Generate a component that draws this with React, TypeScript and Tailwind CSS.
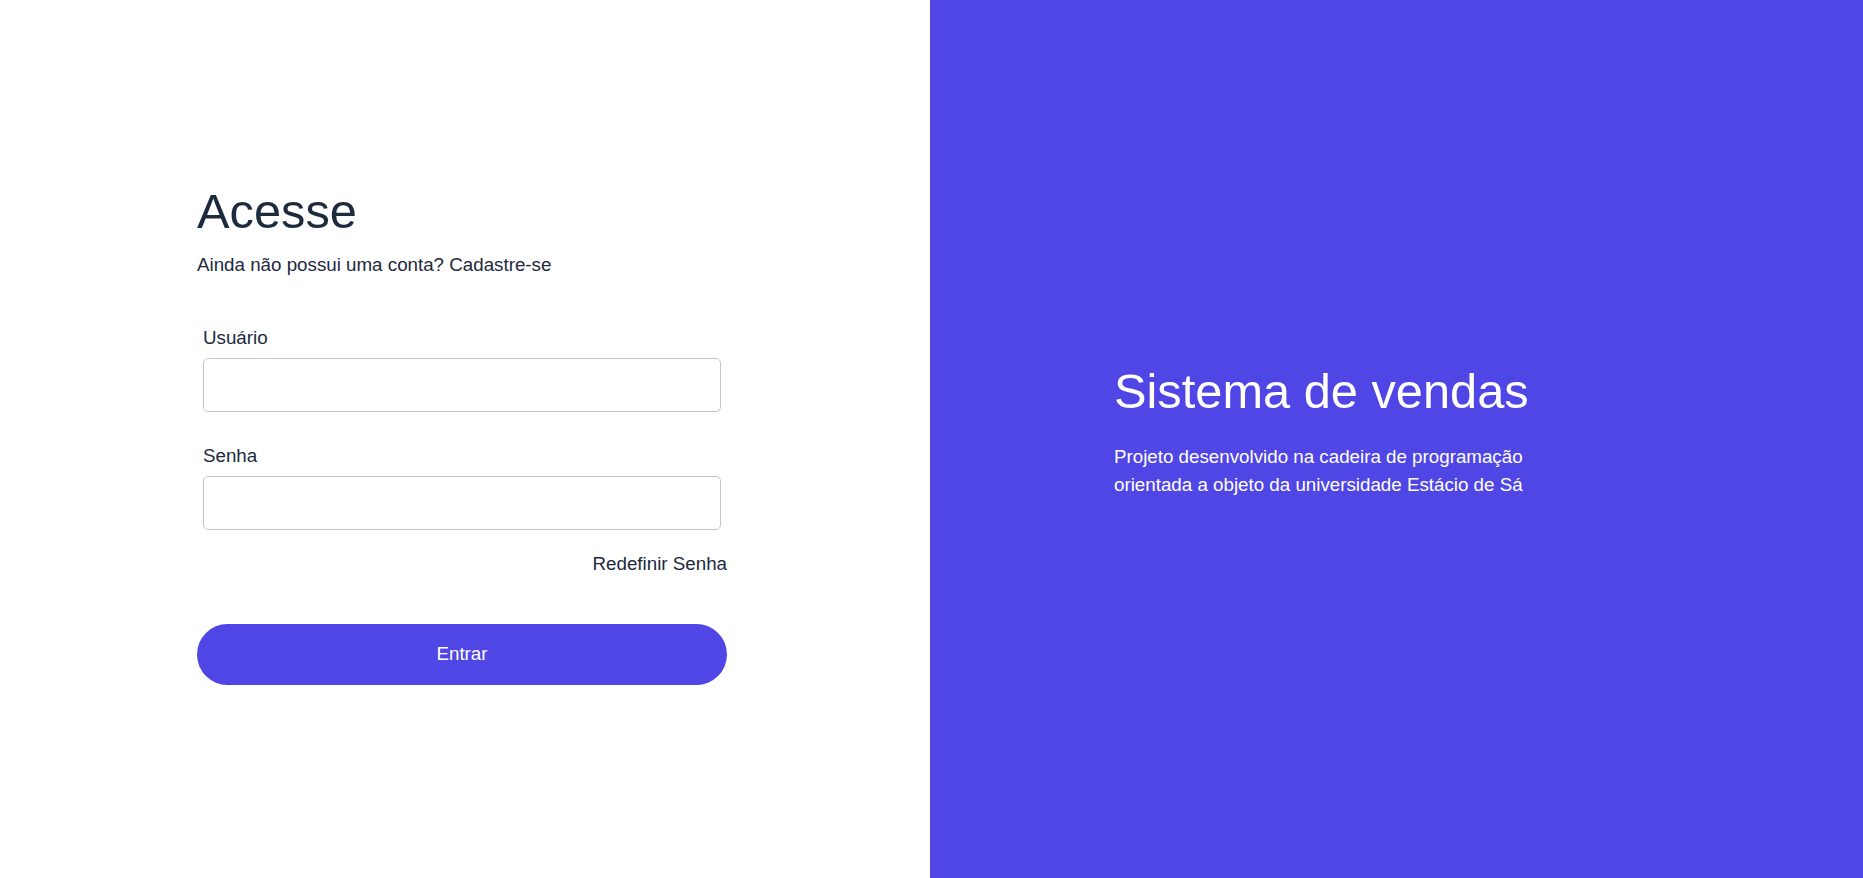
import React, {useState} from 'react';

const Login = () => {
  const [usuario, setUsuario] = useState<string>('');
  const [senha, setSenha] = useState<string>('');

  const handleLogin = (e: React.FormEvent<HTMLFormElement>) => {
    e.preventDefault();
  };

  return (
    <div className="min-h-screen h-[878px] flex font-['Liberation_Sans',Arial,sans-serif]">
      {/* lado do formulario */}
      <div className="w-[930px] bg-white flex flex-col justify-center pl-[197px] pb-[6px]">
        <div className="w-[530px]">
          <h1 className="text-slate-800 text-[48.75px] leading-[48px]">Acesse</h1>
          <p className="text-slate-800 text-[18.75px] leading-7 mt-4">
            Ainda não possui uma conta? <a href="#">Cadastre-se</a>
          </p>

          <form className="mt-[45px]" onSubmit={handleLogin}>
            <div className="px-1.5">
              <label className="text-slate-800 text-[18.75px] leading-7 block mb-1.5">Usuário</label>
              <input
                name="usuario"
                type="text"
                value={usuario}
                onChange={(e) => setUsuario(e.target.value)}
                className="w-full h-[54px] border border-[#c4c4c4] rounded-[5px] px-3 text-lg text-slate-800 outline-none"
              />
            </div>

            <div className="px-1.5 mt-[30px]">
              <label className="text-slate-800 text-[18.75px] leading-7 block mb-1.5">Senha</label>
              <input
                name="senha"
                type="password"
                value={senha}
                onChange={(e) => setSenha(e.target.value)}
                className="w-full h-[54px] border border-[#c4c4c4] rounded-[5px] px-3 text-lg text-slate-800 outline-none"
              />
            </div>

            <div className="flex justify-end mt-5">
              <a href="#" className="text-slate-800 text-[18.75px] leading-7">
                Redefinir Senha
              </a>
            </div>

            <button
              type="submit"
              className="w-full h-[61px] mt-[46px] rounded-full bg-[#4f46e5] text-white text-[18.75px]"
            >
              Entrar
            </button>
          </form>
        </div>
      </div>

      {/* lado da apresentacao */}
      <div className="flex-1 bg-[#4f46e5] flex flex-col justify-center pl-[184px] pb-3">
        <h2 className="text-white text-[48.75px] leading-[48px]">Sistema de vendas</h2>
        <p className="text-white text-[18.75px] leading-7 w-[460px] mt-7">
          Projeto desenvolvido na cadeira de programação orientada a objeto da universidade Estácio de Sá
        </p>
      </div>
    </div>
  );
};

export default function App() {
  return <Login />;
}
